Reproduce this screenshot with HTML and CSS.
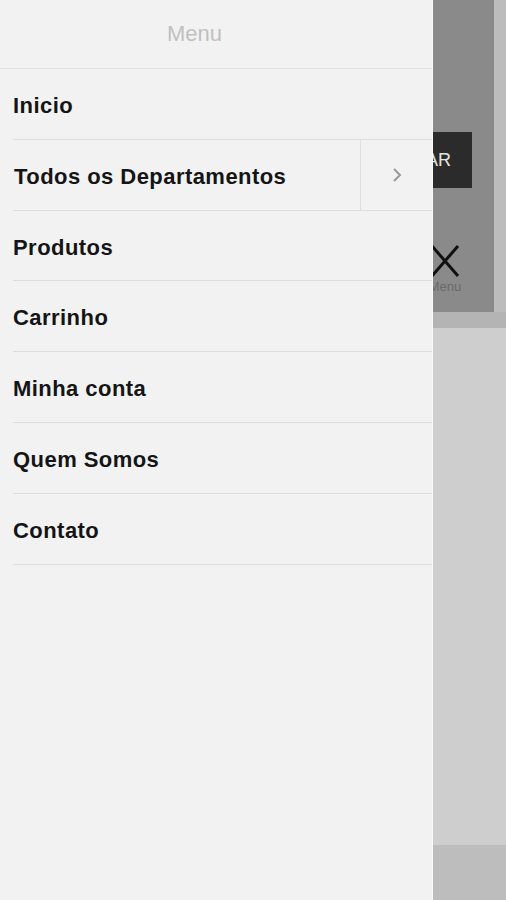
FILE: index.html
```html
<!DOCTYPE html>
<html lang="pt-BR">
<head>
    <meta charset="UTF-8">
    <title>Menu</title>
    <link rel="stylesheet" href="styles.css">
</head>
<body>
<div class="page">
    <div class="top">
        <div class="header">
            <button class="searchBtn">BUSCAR</button>
            <div class="toggle">
                <svg width="30" height="34" viewBox="0 0 30 34">
                    <path d="M2 2 L28 32 M28 2 L2 32" stroke="#111" stroke-width="3" fill="none"/>
                </svg>
                <span>Menu</span>
            </div>
        </div>
        <div class="strip"></div>
    </div>
    <div class="band"></div>
    <div class="main"></div>
    <div class="footer"></div>
</div>

<div class="drawer">
    <div class="drawerHead">Menu</div>
    <ul class="menuList">
        <li class="item">Inicio</li>
        <li class="item sub">
            <span class="label">Todos os Departamentos</span>
            <span class="arrow">
                <svg width="12" height="18" viewBox="0 0 12 18">
                    <path d="M3 3 L9 9 L3 15" stroke="#999" stroke-width="2" fill="none"/>
                </svg>
            </span>
        </li>
        <li class="item">Produtos</li>
        <li class="item">Carrinho</li>
        <li class="item">Minha conta</li>
        <li class="item">Quem Somos</li>
        <li class="item">Contato</li>
    </ul>
</div>
</body>
</html>
```

FILE: styles.css
```css
body {
    margin: 0;
    font-family: "Liberation Sans", Arial, sans-serif;
    background: #cfcfcf;
    overflow: hidden;
}
.page {
    height: 900px;
    display: flex;
    flex-direction: column;
}
.top {
    display: flex;
    height: 312px;
}
.header {
    flex: 1;
    background: #8a8a8a;
    display: flex;
    flex-direction: column;
    align-items: flex-end;
    padding-right: 22px;
}
.strip {
    width: 12px;
    background: #bcbcbc;
}
.searchBtn {
    margin-top: 132px;
    height: 56px;
    width: 110px;
    padding: 0 21px 0 0;
    text-align: right;
    border: none;
    background: #2b2b2b;
    color: #e4e4e4;
    font-family: "Liberation Sans", Arial, sans-serif;
    font-size: 18px;
}
.toggle {
    margin-top: 56px;
    margin-right: 5px;
    display: flex;
    flex-direction: column;
    align-items: center;
    width: 44px;
}
.toggle span {
    font-size: 13px;
    color: #6a6a6a;
    margin-top: 1px;
}
.band {
    height: 16px;
    background: #b4b4b4;
}
.main {
    flex: 1;
    background: #cecece;
}
.footer {
    height: 55px;
    background: #bdbdbd;
}

.drawer {
    position: fixed;
    left: 0;
    top: 0;
    width: 433px;
    height: 900px;
    background: #f2f2f2;
    border-right: 1px solid #fafafa;
    box-sizing: border-box;
}
.drawerHead {
    height: 68px;
    line-height: 68px;
    padding-right: 43px;
    text-align: center;
    font-size: 22px;
    color: #c0c0c0;
    border-bottom: 1px solid #e2e2e2;
}
.menuList {
    list-style: none;
    margin: 0;
    padding: 0 0 0 13px;
}
.item {
    box-sizing: border-box;
    height: 70.8px;
    line-height: 74px;
    border-bottom: 1px solid #dedede;
    font-size: 22px;
    font-weight: bold;
    letter-spacing: 0.45px;
    color: #151515;
}
.sub {
    display: flex;
}
.sub .label {
    flex: 1;
    padding-left: 1px;
}
.arrow {
    width: 71px;
    border-left: 1px solid #dedede;
    display: flex;
    align-items: center;
    justify-content: center;
}
```
